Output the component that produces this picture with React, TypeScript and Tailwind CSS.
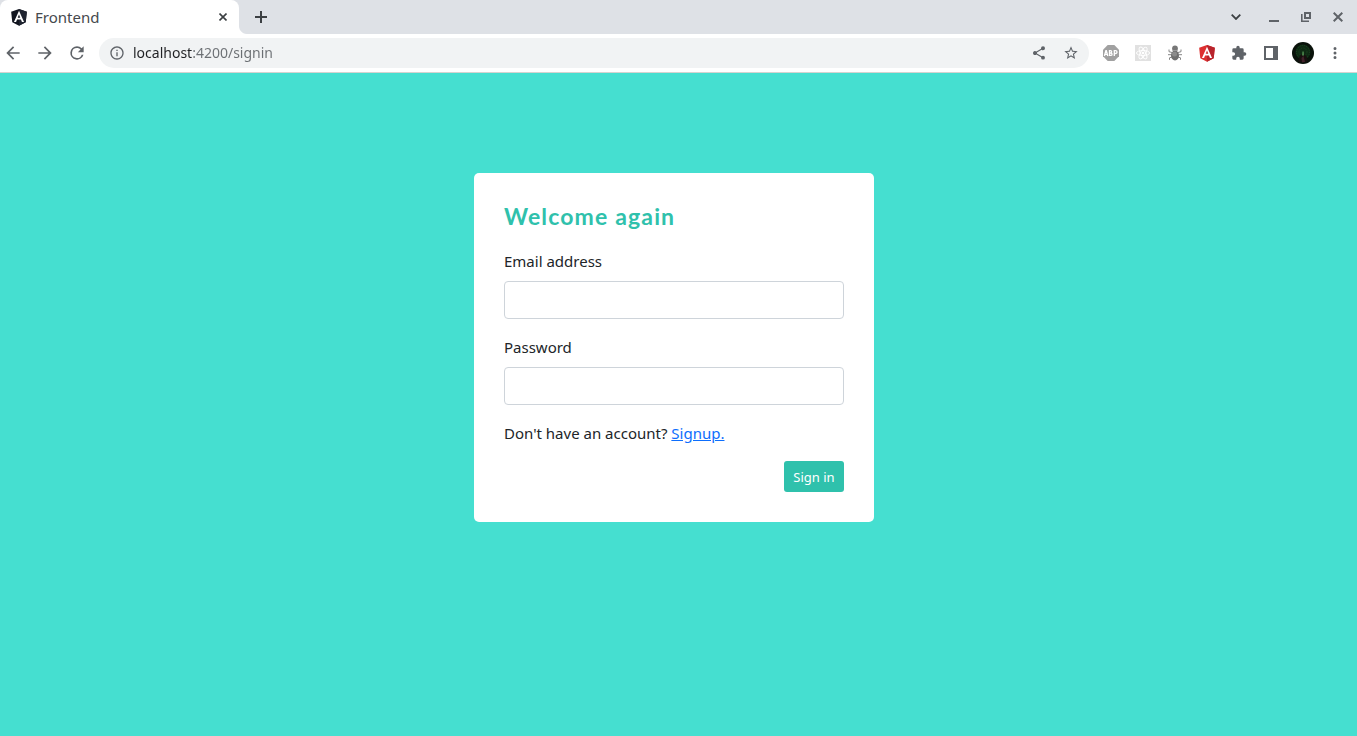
import { useId } from 'react';
import type { ReactNode } from 'react';

function Icon({ d, className = 'size-5' }: { d: string; className?: string }) {
  return (
    <svg viewBox="0 0 24 24" fill="currentColor" aria-hidden="true" className={className}>
      <path d={d} />
    </svg>
  );
}

function ChromeButton({ label, children }: { label: string; children: ReactNode }) {
  return (
    <button type="button" aria-label={label} className="flex size-6 shrink-0 items-center justify-center rounded-full text-[#5f6368]">
      {children}
    </button>
  );
}

function AngularMark({ left, right }: { left: string; right: string }) {
  return (
    <svg viewBox="0 0 250 250" aria-hidden="true" className="size-[18px]">
      <path fill={left} d="M125 14 16 53l16 144 93 51 93-51 16-144z" />
      <path fill={right} d="M125 14v234l93-51 16-144z" />
      <path fill="#fff" d="M125 38 55 196h29l14-35h54l14 35h29L125 38zm18 99h-36l18-46z" />
    </svg>
  );
}

const paths = {
  back: 'M20 11H7.83l5.59-5.59L12 4l-8 8 8 8 1.41-1.41L7.83 13H20z',
  forward: 'm12 4-1.41 1.41L16.17 11H4v2h12.17l-5.58 5.59L12 20l8-8z',
  reload: 'M17.65 6.35A7.96 7.96 0 0 0 12 4a8 8 0 1 0 7.73 10h-2.08A6 6 0 1 1 12 6c1.66 0 3.14.69 4.22 1.78L13 11h7V4z',
  info: 'M11 17h2v-6h-2zm1-15C6.48 2 2 6.48 2 12s4.48 10 10 10 10-4.48 10-10S17.52 2 12 2zm0 18c-4.41 0-8-3.59-8-8s3.59-8 8-8 8 3.59 8 8-3.59 8-8 8zM11 9h2V7h-2z',
  share: 'M18 16.08c-.76 0-1.44.3-1.96.77L8.91 12.7c.05-.23.09-.46.09-.7s-.04-.47-.09-.7l7.05-4.11c.54.5 1.25.81 2.04.81a3 3 0 1 0-3-3c0 .24.04.47.09.7L8.04 9.81A3 3 0 1 0 6 15c.79 0 1.5-.31 2.04-.81l7.12 4.16c-.05.21-.08.43-.08.65A2.92 2.92 0 1 0 18 16.08z',
  star: 'm22 9.24-7.19-.62L12 2 9.19 8.63 2 9.24l5.46 4.73L5.82 21 12 17.27 18.18 21l-1.63-7.03zM12 15.4l-3.76 2.27 1-4.28-3.32-2.88 4.38-.38L12 6.1l1.71 4.04 4.38.38-3.32 2.88 1 4.28z',
  puzzle: 'M20.5 11H19V7a2 2 0 0 0-2-2h-4V3.5a2.5 2.5 0 0 0-5 0V5H4a2 2 0 0 0-2 2v3.8h1.5a2.7 2.7 0 0 1 0 5.4H2V20a2 2 0 0 0 2 2h3.8v-1.5a2.7 2.7 0 0 1 5.4 0V22H17a2 2 0 0 0 2-2v-4h1.5a2.5 2.5 0 0 0 0-5z',
  menu: 'M12 8a2 2 0 1 0 0-4 2 2 0 0 0 0 4zm0 2a2 2 0 1 0 0 4 2 2 0 0 0 0-4zm0 6a2 2 0 1 0 0 4 2 2 0 0 0 0-4z',
};

function TabStrip() {
  return (
    <div className="flex h-[34px] items-center bg-[#dee1e6]">
      <div className="flex h-full w-[239px] items-center gap-[7px] rounded-t-lg bg-white pr-2 pl-[10px]">
        <AngularMark left="#12151f" right="#1f2430" />
        <span className="flex-1 text-[15px] leading-5 text-[#45494d]">Frontend</span>
        <button type="button" aria-label="Close tab" className="flex size-4 items-center justify-center text-[#3c4043]">
          <svg viewBox="0 0 8 8" className="size-2" stroke="currentColor" strokeWidth="1.6" aria-hidden="true">
            <path d="M.5.5l7 7M7.5.5l-7 7" />
          </svg>
        </button>
      </div>
      <div className="size-2 self-end bg-[radial-gradient(circle_at_100%_0%,#dee1e6_7.5px,#ffffff_8.5px)]" />
      <div className="flex flex-1 items-center pl-[2px]">
        <button type="button" aria-label="New tab" className="flex size-6 items-center justify-center text-[#3c4043]">
          <svg viewBox="0 0 12 12" className="size-3" stroke="currentColor" strokeWidth="2" aria-hidden="true">
            <path d="M6 0v12M0 6h12" />
          </svg>
        </button>
      </div>
      <div className="flex items-center gap-2 pr-[7px]">
        <div className="flex pr-[6px]">
          <ChromeButton label="Search tabs">
            <svg viewBox="0 0 10 6" className="h-[6px] w-[10px] text-[#3c4043]" fill="none" stroke="currentColor" strokeWidth="1.8" aria-hidden="true">
              <path d="M.7.7 5 5 9.3.7" />
            </svg>
          </ChromeButton>
        </div>
        <ChromeButton label="Minimize">
          <svg viewBox="0 0 10 10" className="size-[10px]" fill="currentColor" aria-hidden="true">
            <path d="M0 8h10v2H0z" />
          </svg>
        </ChromeButton>
        <ChromeButton label="Restore">
          <svg viewBox="0 0 10 10" className="size-[10px]" fill="none" stroke="currentColor" aria-hidden="true">
            <path strokeWidth="2" d="M4 1h5v5H4z" />
            <path strokeWidth="1.6" d="M.8 2v7.2H8" />
          </svg>
        </ChromeButton>
        <ChromeButton label="Close window">
          <svg viewBox="0 0 10 10" className="size-[10px]" stroke="currentColor" strokeWidth="2" aria-hidden="true">
            <path d="M.7.7l8.6 8.6M9.3.7.7 9.3" />
          </svg>
        </ChromeButton>
      </div>
    </div>
  );
}

function Extensions() {
  return (
    <div className="flex items-center gap-2">
      <ChromeButton label="Ad blocker">
        <svg viewBox="0 0 16 16" className="size-4" aria-hidden="true">
          <path fill="#a1a1a1" d="M4.7 0h6.6L16 4.7v6.6L11.3 16H4.7L0 11.3V4.7z" />
          <g fill="none" stroke="#fff" strokeWidth="1.3">
            <path d="M1.4 11 2.9 5.6h.4L4.8 11M1.9 9.3h2.4" />
            <path d="M6.5 5.6v4.8h1.2c1.8 0 1.8-2.4 0-2.4H6.5h1c1.6 0 1.6-2.4 0-2.4z" />
            <path d="M11.3 11V5.6h1.2c2 0 2 2.9 0 2.9h-1.2" />
          </g>
        </svg>
      </ChromeButton>
      <ChromeButton label="React developer tools">
        <svg viewBox="0 0 16 16" className="size-4" aria-hidden="true">
          <path fill="#e1e1e1" d="M0 0h16v16H0z" />
          <g fill="none" stroke="#fff" strokeWidth="0.9">
            <ellipse cx="8" cy="8" rx="6.6" ry="2.5" />
            <ellipse cx="8" cy="8" rx="6.6" ry="2.5" transform="rotate(60 8 8)" />
            <ellipse cx="8" cy="8" rx="6.6" ry="2.5" transform="rotate(120 8 8)" />
          </g>
          <circle cx="8" cy="8" r="1.3" fill="#fff" />
        </svg>
      </ChromeButton>
      <ChromeButton label="Debugger">
        <svg viewBox="0 0 16 16" className="size-4" aria-hidden="true">
          <path
            fill="none"
            stroke="#858585"
            d="M5 7.5 2 6.7V4.5M4.5 9.7H1M5 12l-2.5.8v2M11 7.5l3-.8V4.5M11.5 9.7H15M11 12l2.5.8v2"
          />
          <ellipse cx="8" cy="10.5" rx="4" ry="5" fill="#6f6f6f" />
          <circle cx="7.5" cy="9" r="2.5" fill="#8c8c8c" />
          <circle cx="8" cy="3.5" r="2.9" fill="#777" />
          <path fill="none" stroke="#a8a8a8" strokeWidth="0.7" d="M5.2 5.5h5.6" />
        </svg>
      </ChromeButton>
      <ChromeButton label="Angular developer tools">
        <AngularMark left="#dd3030" right="#b8242c" />
      </ChromeButton>
      <ChromeButton label="Extensions">
        <Icon d={paths.puzzle} className="size-4" />
      </ChromeButton>
      <ChromeButton label="Side panel">
        <svg viewBox="0 0 14 14" className="size-[14px]" aria-hidden="true">
          <path fill="none" stroke="currentColor" strokeWidth="2" d="M1 1h12v12H1z" />
          <path fill="currentColor" d="M9 1h4v12H9z" />
        </svg>
      </ChromeButton>
      <ChromeButton label="Profile">
        <svg viewBox="0 0 22 22" className="size-[22px]" aria-hidden="true">
          <circle cx="11" cy="11" r="11" fill="#0a120b" />
          <circle cx="11" cy="10" r="7.5" fill="#0f2a14" />
          <g fill="none" stroke="#1f4a24" strokeWidth="0.8">
            <circle cx="11" cy="10" r="6.5" strokeDasharray="1 1.2" />
            <circle cx="11" cy="10" r="4" strokeDasharray="1 0.8" />
          </g>
          <path fill="#17100f" d="M6.5 20c0-5 1.5-7.5 4.5-8 3 .5 4.5 3 4.5 8z" />
          <path fill="#41202a" d="m9.5 16 2-2 1.5 6-3 .5z" />
          <path fill="#4e8a4e" d="M10.4 9.5h1.3l.3 4h-1.9z" />
        </svg>
      </ChromeButton>
      <ChromeButton label="Browser menu">
        <Icon d={paths.menu} className="size-[18px]" />
      </ChromeButton>
    </div>
  );
}

function Toolbar() {
  return (
    <div className="flex items-center gap-[10px] border-b border-[#d5d3d0] bg-white py-1 pr-[10px] pl-px">
      <div className="flex items-center gap-2">
        <ChromeButton label="Back">
          <Icon d={paths.back} />
        </ChromeButton>
        <ChromeButton label="Forward">
          <Icon d={paths.forward} />
        </ChromeButton>
        <ChromeButton label="Reload">
          <Icon d={paths.reload} />
        </ChromeButton>
      </div>
      <div className="flex h-[30px] flex-1 items-center gap-2 rounded-full bg-[#f1f3f4] pr-[6px] pl-[10px]">
        <Icon d={paths.info} className="size-4 text-[#5f6368]" />
        <input
          type="text"
          aria-label="Address"
          defaultValue="localhost:4200/signin"
          className="h-5 min-w-0 flex-1 bg-linear-to-r from-[#202124] from-[59px] to-[#6b6f73] to-[59px] bg-clip-text text-[14px] leading-5 text-transparent caret-black outline-none"
        />
        <ChromeButton label="Share">
          <Icon d={paths.share} className="size-4" />
        </ChromeButton>
        <ChromeButton label="Bookmark">
          <Icon d={paths.star} className="size-4" />
        </ChromeButton>
      </div>
      <Extensions />
    </div>
  );
}

function Field({ label, type }: { label: string; type: string }) {
  const id = useId();
  return (
    <div className="mb-4">
      <label htmlFor={id} className="mb-2 block">
        {label}
      </label>
      <input
        id={id}
        type={type}
        className="block h-[38px] w-full rounded border border-[#ced4da] bg-white px-3 outline-none focus:border-[#2fc1ac]"
      />
    </div>
  );
}

function SignInCard() {
  return (
    <form
      onSubmit={(event) => event.preventDefault()}
      className="w-full max-w-[400px] rounded-[5px] bg-white p-[30px] text-[15px] leading-6 text-[#212529]"
    >
      <h1 className="mb-5 font-['Lato',sans-serif] text-[23px] leading-[26px] font-bold tracking-wider text-[#2fc1ac]">
        Welcome again
      </h1>
      <Field label="Email address" type="email" />
      <Field label="Password" type="password" />
      <p className="mb-4">
        Don't have an account?{' '}
        <a href="#signup" className="text-[#0d6efd] underline">
          Signup.
        </a>
      </p>
      <div className="flex justify-end">
        <button type="submit" className="h-[31px] w-[60px] rounded-[3px] bg-[#2fc1ac] text-[13px] leading-5 text-white">
          Sign in
        </button>
      </div>
    </form>
  );
}

export default function App() {
  return (
    <div className="flex min-h-screen flex-col bg-[#45dfd0] font-['Noto_Sans',sans-serif]">
      <header>
        <TabStrip />
        <Toolbar />
      </header>
      <main className="flex flex-1 items-start justify-center pt-[100px] pr-[9px]">
        <SignInCard />
      </main>
    </div>
  );
}
